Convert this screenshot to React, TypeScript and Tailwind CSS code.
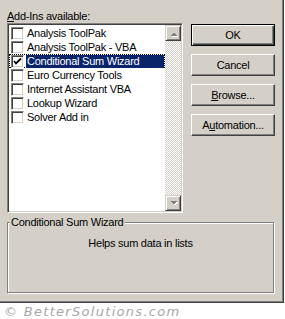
import React from 'react'

const items = [
  { name: 'Analysis ToolPak', checked: false },
  { name: 'Analysis ToolPak - VBA', checked: false },
  { name: 'Conditional Sum Wizard', checked: true },
  { name: 'Euro Currency Tools', checked: false },
  { name: 'Internet Assistant VBA', checked: false },
  { name: 'Lookup Wizard', checked: false },
  { name: 'Solver Add in', checked: false },
]

const selected = 2

const CheckBox = ({ checked }: { checked: boolean }) => (
  <div className="w-[13px] h-[13px] shrink-0 bg-white border-t border-l border-[#808080] border-b border-r border-b-white border-r-white shadow-[inset_1px_1px_0_#404040,inset_-1px_-1px_0_#d4d0c8] flex items-center justify-center">
    {checked && (
      <svg width="11" height="11" viewBox="0 0 11 11">
        <polyline points="2,5 4,7.5 9,2.5" fill="none" stroke="#000" strokeWidth="1.8" />
      </svg>
    )}
  </div>
)

const ScrollButton = ({ dir }: { dir: 'up' | 'down' }) => (
  <div className="w-[16px] h-[16px] shrink-0 bg-[#d4d0c8] border-t border-l border-[#d4d0c8] border-b border-r border-b-[#404040] border-r-[#404040] shadow-[inset_1px_1px_0_#fff,inset_-1px_-1px_0_#808080]">
    <svg width="14" height="14" viewBox="0 0 14 14" shapeRendering="crispEdges">
      {dir === 'up' ? (
        <>
          <polygon points="4,10 11,10 7.5,6.5" fill="#fff" transform="translate(1,1)" />
          <polygon points="4,10 11,10 7.5,6.5" fill="#808080" />
        </>
      ) : (
        <>
          <polygon points="4,5 11,5 7.5,8.5" fill="#fff" transform="translate(1,1)" />
          <polygon points="4,5 11,5 7.5,8.5" fill="#808080" />
        </>
      )}
    </svg>
  </div>
)

const DialogButton = ({ children, isDefault = false }: { children: React.ReactNode; isDefault?: boolean }) => (
  <div
    className={
      isDefault
        ? 'w-[84px] h-[22px] flex items-center justify-center border border-black shadow-[inset_1px_1px_0_#fff,inset_-1px_-1px_0_#404040,inset_-2px_-2px_0_#808080]'
        : 'w-[84px] h-[22px] flex items-center justify-center border-t border-l border-white border-b border-r border-b-[#404040] border-r-[#404040] shadow-[inset_-1px_-1px_0_#808080]'
    }
  >
    {children}
  </div>
)

export default function App() {
  return (
    <div className="w-[285px] h-[319px] bg-white overflow-hidden font-['Liberation_Sans',Arial,sans-serif] text-[11px] leading-[14px] tracking-[-0.25px] text-black">
      <div className="w-[284px] h-[303px] bg-[#d4d0c8] border-r border-b border-[#404040] shadow-[inset_-1px_-1px_0_#808080] pl-[7px] pt-[9px] flex flex-col">
        <div className="flex gap-[8px]">
          {/* Add-ins list */}
          <div className="w-[176px] flex flex-col">
            <div className="h-[14px]">
              <span className="underline">A</span>dd-Ins available:
            </div>
            <div className="h-[190px] flex p-[1px] bg-white border-t border-l border-[#808080] border-b border-r border-b-white border-r-white shadow-[inset_1px_1px_0_#404040,inset_-1px_-1px_0_#d4d0c8]">
              <div className="flex-1 pt-[1px] flex flex-col">
                {items.map((item, i) => (
                  <div
                    key={item.name}
                    className={
                      i === selected
                        ? 'h-[14px] flex items-center pl-[1px] border border-dotted border-black'
                        : 'h-[14px] flex items-center pl-[2px]'
                    }
                  >
                    <CheckBox checked={item.checked} />
                    <div
                      className={
                        i === selected
                          ? 'flex-1 h-[13px] ml-[2px] pl-[1px] bg-[#0a246a] text-white leading-[13px]'
                          : 'flex-1 ml-[3px]'
                      }
                    >
                      {item.name}
                    </div>
                  </div>
                ))}
              </div>
              <div className="w-[16px] flex flex-col bg-[image:repeating-conic-gradient(#d4d0c8_0%_25%,#ffffff_0%_50%)] bg-[length:2px_2px]">
                <ScrollButton dir="up" />
                <div className="flex-1" />
                <ScrollButton dir="down" />
              </div>
            </div>
          </div>

          {/* Buttons */}
          <div className="pt-[15px] flex flex-col gap-[8px]">
            <DialogButton isDefault>OK</DialogButton>
            <DialogButton>Cancel</DialogButton>
            <DialogButton>
              <span>
                <span className="underline">B</span>rowse...
              </span>
            </DialogButton>
            <DialogButton>
              <span>
                A<span className="underline">u</span>tomation...
              </span>
            </DialogButton>
          </div>
        </div>

        {/* Description group */}
        <div className="relative mt-[9px] w-[267px] h-[71px] border border-[#808080] shadow-[inset_1px_1px_0_#fff,1px_1px_0_#fff]">
          <span className="absolute left-[2px] top-[-8px] px-[1px] bg-[#d4d0c8]">Conditional Sum Wizard</span>
          <div className="pt-[13px] text-center">Helps sum data in lists</div>
        </div>
      </div>

      <div className="pl-[4px] pt-[2px] font-['DejaVu_Sans',sans-serif] italic text-[13px] leading-[14px] tracking-[1.3px] text-[#a8a8a8]">
        © BetterSolutions.com
      </div>
    </div>
  )
}
